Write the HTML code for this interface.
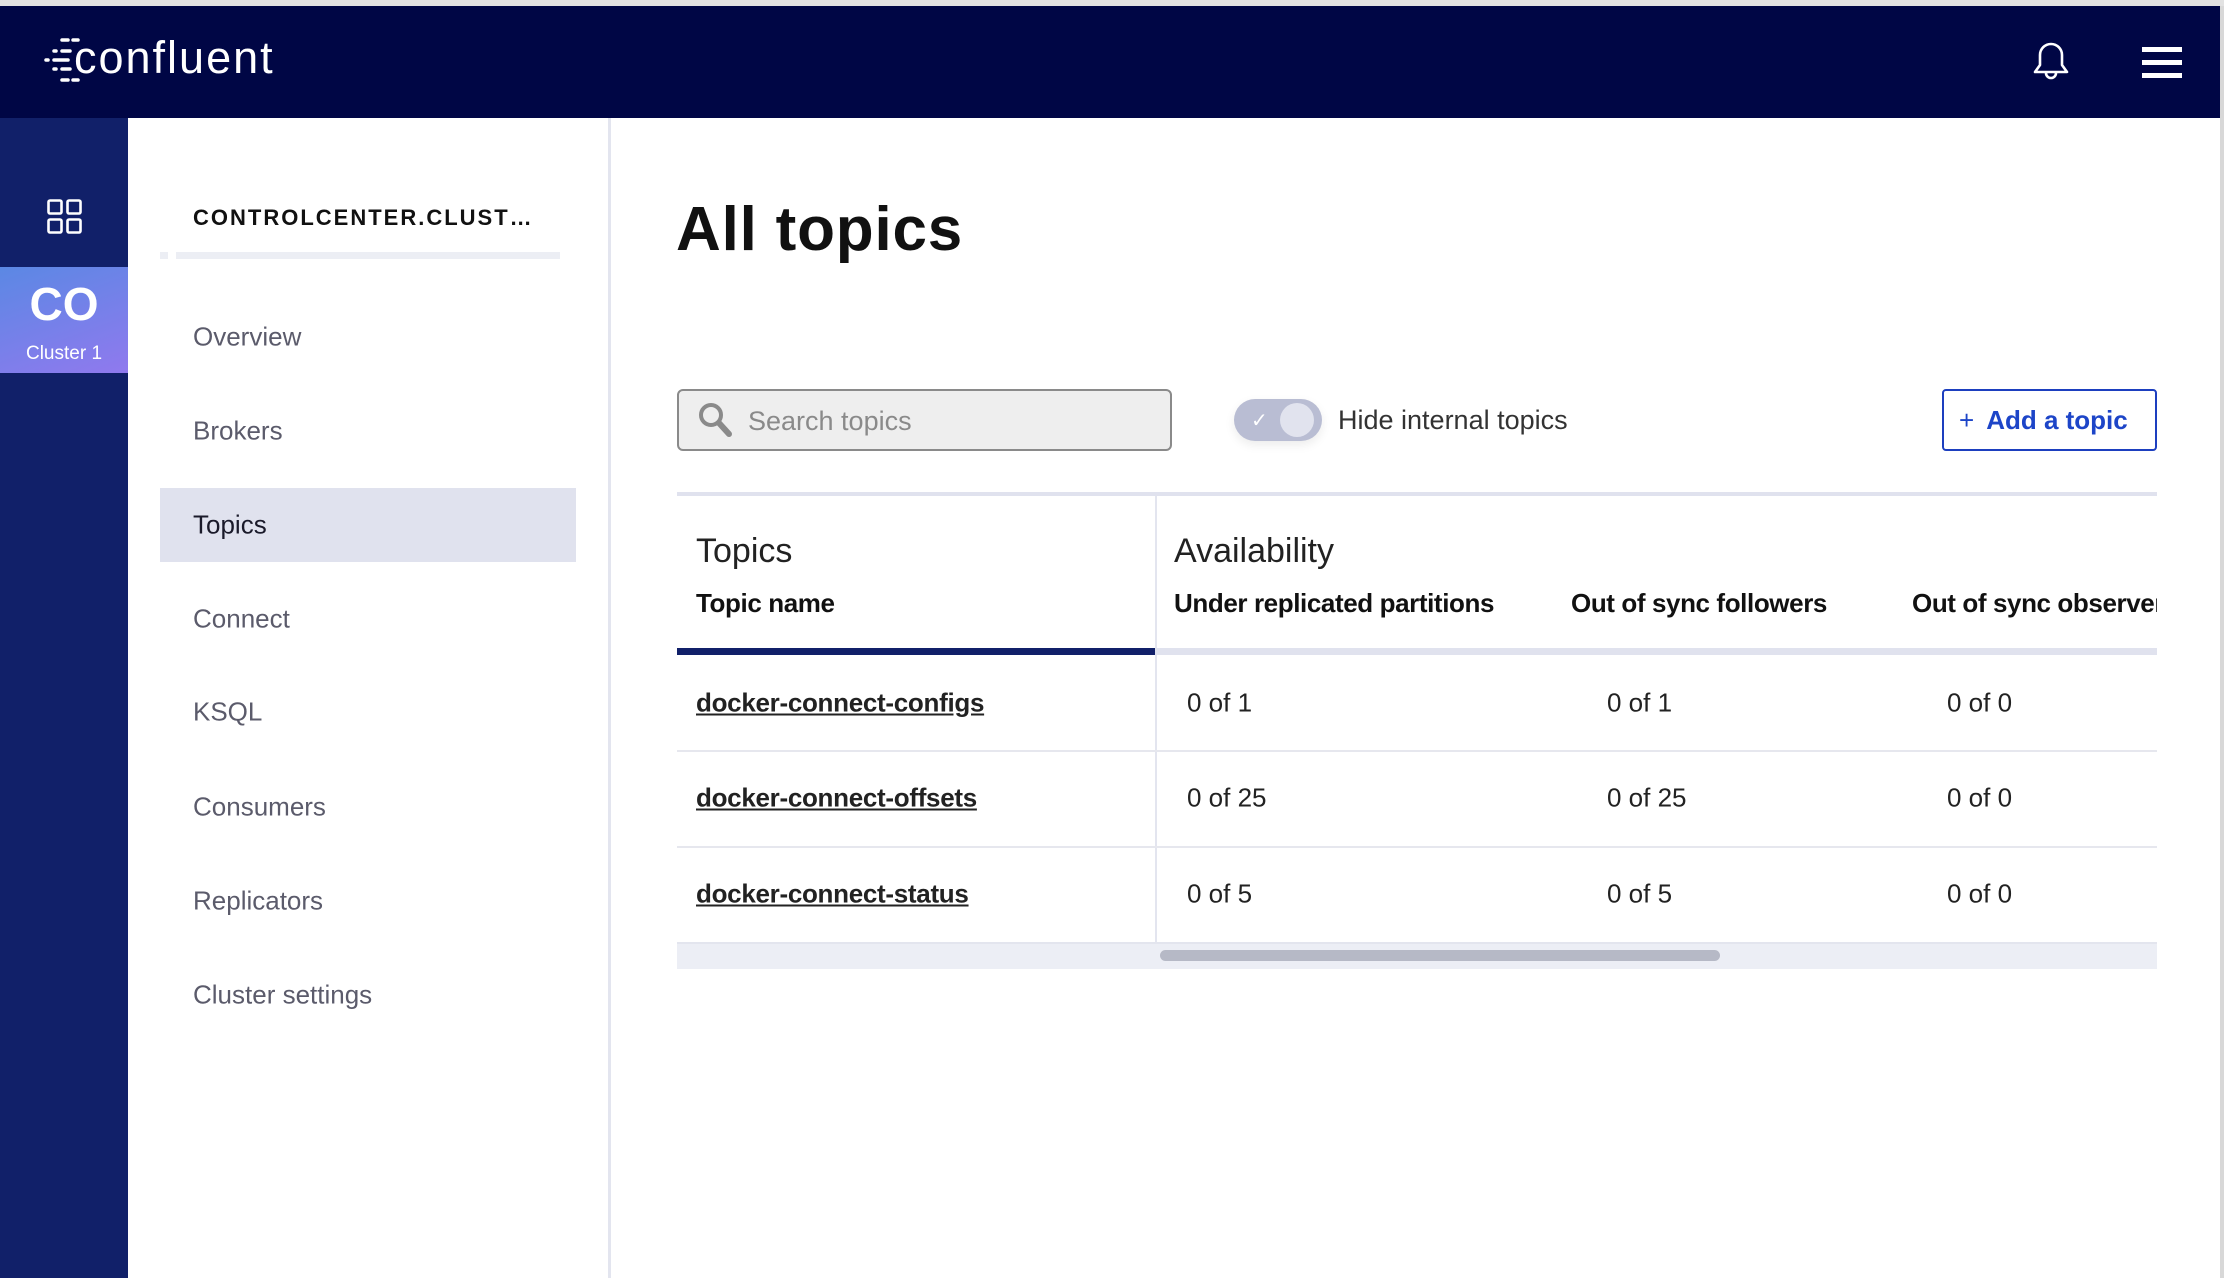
<!DOCTYPE html>
<html><head><meta charset="utf-8"><style>
*{margin:0;padding:0;box-sizing:border-box}
body{width:2224px;height:1278px;overflow:hidden;background:#fff;font-family:"Liberation Sans",Arial,sans-serif;position:relative}
.a{position:absolute}
.topstrip{left:0;top:0;width:2224px;height:6px;background:#e2e2e2}
.header{left:0;top:6px;width:2220px;height:112px;background:#000645}
.rail{left:0;top:118px;width:128px;height:1160px;background:#112069}
.co{left:0;top:267px;width:128px;height:106px;background:linear-gradient(160deg,#5b88e4,#9079ee);color:#fff;text-align:center}
.side{left:128px;top:118px;width:483px;height:1160px;background:#fff;border-right:3px solid #e3e5ef}
.nav{left:193px;font-size:26px;color:#5b5b6b;transform:translateY(-50%)}
.td{font-size:26px;color:#222;transform:translateY(-50%)}
.link{font-size:26px;color:#222;text-decoration:underline;transform:translateY(-50%);font-weight:bold;letter-spacing:-0.3px}
</style></head><body>
<div class="a topstrip"></div>
<div class="a header"></div>
<svg class="a" style="left:42px;top:36px" width="40" height="50" viewBox="0 0 40 50">
<g stroke="#fff" stroke-width="3.5" stroke-linecap="round">
<line x1="20" y1="4" x2="26" y2="4"/><line x1="31" y1="4" x2="36" y2="4"/>
<line x1="12" y1="15" x2="14" y2="15"/><line x1="20" y1="15" x2="28" y2="15"/>
<line x1="4" y1="24" x2="6" y2="24"/><line x1="12" y1="24" x2="26" y2="24"/>
<line x1="12" y1="33" x2="14" y2="33"/><line x1="20" y1="33" x2="28" y2="33"/>
<line x1="20" y1="44" x2="26" y2="44"/><line x1="31" y1="44" x2="36" y2="44"/>
</g></svg>
<div class="a" style="left:74px;top:32px;font-size:45px;color:#fff;letter-spacing:2px;font-weight:300">confluent</div>
<svg class="a" style="left:2031px;top:40px" width="40" height="44" viewBox="0 0 40 44" fill="none" stroke="#fff" stroke-width="2.6">
<path d="M4 32 L9 25 V15 A11 11 0 0 1 31 15 V25 L36 32 Z" stroke-linejoin="round"/>
<path d="M15 33 A5 5 0 0 0 25 33"/></svg>
<div class="a" style="left:2142px;top:47px;width:40px;height:5px;background:#fff"></div>
<div class="a" style="left:2142px;top:60px;width:40px;height:5px;background:#fff"></div>
<div class="a" style="left:2142px;top:73px;width:40px;height:5px;background:#fff"></div>
<div class="a" style="left:2220px;top:6px;width:4px;height:1272px;background:#d8d8d8"></div>

<div class="a rail"></div>
<svg class="a" style="left:47px;top:199px" width="35" height="35" viewBox="0 0 35 35" fill="none" stroke="#fff" stroke-width="2.6">
<rect x="1.5" y="1.5" width="13" height="13" rx="1.5"/><rect x="20.5" y="1.5" width="13" height="13" rx="1.5"/>
<rect x="1.5" y="20.5" width="13" height="13" rx="1.5"/><rect x="20.5" y="20.5" width="13" height="13" rx="1.5"/></svg>
<div class="a co"><div style="font-size:46px;font-weight:bold;margin-top:12px;line-height:50px">CO</div><div style="font-size:19px;margin-top:14px">Cluster 1</div></div>

<div class="a side"></div>
<div class="a" style="left:193px;top:205px;font-size:22px;font-weight:bold;letter-spacing:2px;color:#111">CONTROLCENTER.CLUST…</div>
<div class="a" style="left:160px;top:252px;width:8px;height:7px;background:#eceef4"></div>
<div class="a" style="left:176px;top:252px;width:384px;height:7px;background:#eceef4"></div>
<div class="a" style="left:160px;top:488px;width:416px;height:74px;background:#e0e2ee"></div>
<div class="a nav" style="top:337px">Overview</div>
<div class="a nav" style="top:431px">Brokers</div>
<div class="a nav" style="top:525px;color:#1a1a2a">Topics</div>
<div class="a nav" style="top:619px">Connect</div>
<div class="a nav" style="top:712px">KSQL</div>
<div class="a nav" style="top:807px">Consumers</div>
<div class="a nav" style="top:901px">Replicators</div>
<div class="a nav" style="top:995px">Cluster settings</div>

<div class="a" style="left:676px;top:194px;font-size:62px;font-weight:bold;color:#111;letter-spacing:0.8px">All topics</div>

<div class="a" style="left:677px;top:389px;width:495px;height:62px;background:#eeeeee;border:2px solid #8a8a8a;border-radius:6px"></div>
<svg class="a" style="left:696px;top:400px" width="40" height="40" viewBox="0 0 40 40"><circle cx="15" cy="15" r="10" fill="none" stroke="#8a8a8a" stroke-width="4"/><line x1="23" y1="23" x2="33" y2="34" stroke="#8a8a8a" stroke-width="6" stroke-linecap="round"/></svg>
<div class="a" style="left:748px;top:406px;font-size:27px;color:#8a8a8a">Search topics</div>

<div class="a" style="left:1234px;top:399px;width:88px;height:42px;border-radius:21px;background:#b9bdd3;box-shadow:0 4px 10px rgba(0,0,0,0.08)"></div>
<div class="a" style="left:1280px;top:403px;width:34px;height:34px;border-radius:50%;background:#e1e3ee"></div>
<div class="a" style="left:1251px;top:408px;font-size:20px;color:#fff">✓</div>
<div class="a" style="left:1338px;top:405px;font-size:27px;color:#333">Hide internal topics</div>

<div class="a" style="left:1942px;top:389px;width:215px;height:62px;border:2px solid #1d3fbf;border-radius:4px"></div>
<div class="a" style="left:1959px;top:405px;font-size:26px;color:#1d45c8;font-weight:bold"><span style="font-weight:normal;font-size:26px;margin-right:12px">+</span>Add a topic</div>

<div class="a" style="left:677px;top:492px;width:1480px;height:4px;background:#e0e2ee"></div>
<div class="a" style="left:1155px;top:496px;width:2px;height:446px;background:#e3e5ef"></div>
<div class="a" style="left:696px;top:532px;font-size:34px;color:#222">Topics</div>
<div class="a" style="left:1174px;top:532px;font-size:34px;color:#222">Availability</div>
<div class="a" style="left:696px;top:588px;font-size:26px;color:#111;font-weight:bold;letter-spacing:-0.4px">Topic name</div>
<div class="a" style="left:1174px;top:588px;font-size:26px;color:#111;font-weight:bold;letter-spacing:-0.4px">Under replicated partitions</div>
<div class="a" style="left:1571px;top:588px;font-size:26px;color:#111;font-weight:bold;letter-spacing:-0.4px">Out of sync followers</div>
<div class="a" style="left:1912px;top:588px;font-size:26px;color:#111;font-weight:bold;letter-spacing:-0.4px;width:245px;overflow:hidden;white-space:nowrap">Out of sync observers</div>
<div class="a" style="left:677px;top:648px;width:478px;height:7px;background:#112069"></div>
<div class="a" style="left:1155px;top:648px;width:1002px;height:7px;background:#e0e2ee"></div>

<div class="a link" style="left:696px;top:703px">docker-connect-configs</div>
<div class="a td" style="left:1187px;top:703px">0 of 1</div>
<div class="a td" style="left:1607px;top:703px">0 of 1</div>
<div class="a td" style="left:1947px;top:703px">0 of 0</div>
<div class="a" style="left:677px;top:750px;width:1480px;height:2px;background:#e6e7ee"></div>
<div class="a link" style="left:696px;top:798px">docker-connect-offsets</div>
<div class="a td" style="left:1187px;top:798px">0 of 25</div>
<div class="a td" style="left:1607px;top:798px">0 of 25</div>
<div class="a td" style="left:1947px;top:798px">0 of 0</div>
<div class="a" style="left:677px;top:846px;width:1480px;height:2px;background:#e6e7ee"></div>
<div class="a link" style="left:696px;top:894px">docker-connect-status</div>
<div class="a td" style="left:1187px;top:894px">0 of 5</div>
<div class="a td" style="left:1607px;top:894px">0 of 5</div>
<div class="a td" style="left:1947px;top:894px">0 of 0</div>
<div class="a" style="left:677px;top:942px;width:1480px;height:27px;background:#eceef5;border-top:2px solid #e3e5ee"></div>
<div class="a" style="left:1160px;top:950px;width:560px;height:11px;border-radius:6px;background:#b6b9c6"></div>
</body></html>
